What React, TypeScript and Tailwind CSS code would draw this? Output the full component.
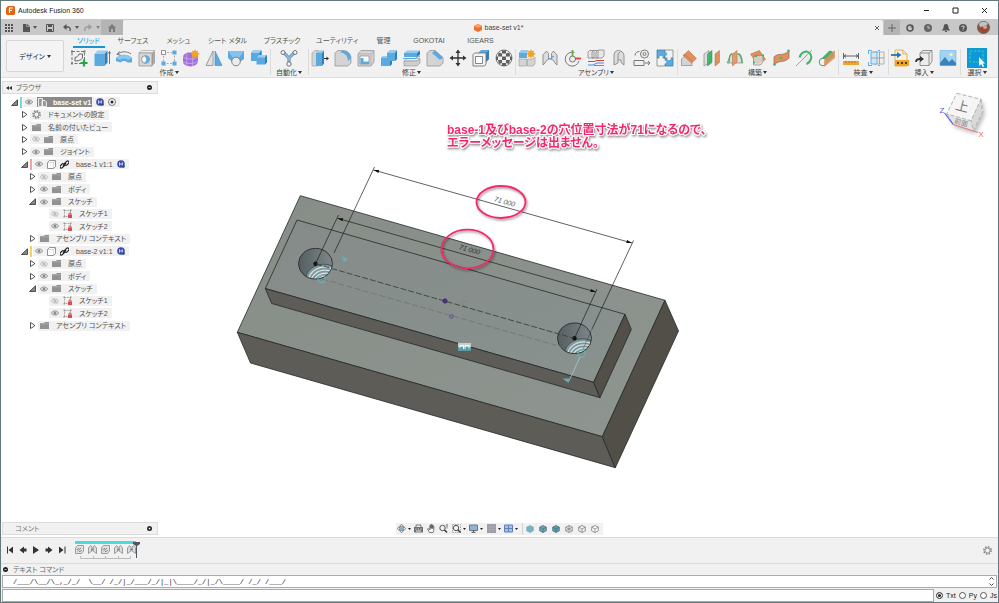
import type { ReactNode } from "react";
import clsx from "clsx";

const BLUE = "#5aa9e0";
const DARK = "#6b6b6b";
const LIGHT = "#dcdcdc";
const ORANGE = "#e0905c";
const GREEN = "#3fb56b";

function Ico({ children, className = "size-[18px]", box = "0 0 18 18" }: { children: ReactNode; className?: string; box?: string }) {
  return (
    <svg viewBox={box} className={clsx("block shrink-0", className)} fill="none" aria-hidden="true">
      {children}
    </svg>
  );
}

function Caret({ className = "text-[#333]" }: { className?: string }) {
  return (
    <Ico box="0 0 4 3" className={clsx("h-[3px] w-1", className)}>
      <path d="M0 0h4L2 3z" fill="currentColor" />
    </Ico>
  );
}

/* ---------- リボンのアイコン ---------- */

const createIcons: [string, ReactNode][] = [
  ["スケッチを作成", <Ico key="i">
    <path d="M2 2.500h12.500v12H2z" stroke="#666" strokeWidth=".9" strokeDasharray="3 1.5" />
    <path d="M1 1.500h2v2H1zM13.500 1.500h2v2h-2zM1 13.500h2v2H1z" fill="#777" />
    <path d="M5 12V8.500C7 8 8.500 7 9 5h3.500v3c0 2.500-3 4-7.500 4z" stroke="#555" strokeWidth=".9" />
    <path d="M14 10.500v7M10.500 14h7" stroke="#23a646" strokeWidth="2.200" />
  </Ico>],
  ["押し出し", <Ico key="i">
    <path d="M1.500 5l3-3.500h10L11.500 5z" fill="#9ccdf0" />
    <path d="M1.500 5h10v12h-10z" fill={BLUE} />
    <path d="M11.500 5L14.500 1.500v12L11.500 17z" fill="#2f7fba" />
    <path d="M16.500 15V3M15.300 4.500l1.200-2 1.200 2" stroke="#555" strokeWidth=".8" />
  </Ico>],
  ["回転", <Ico key="i">
    <path d="M1 9c4-4.500 12-4.500 16 0v4.500h-4.500c-2-2-5-2-7 0L1 12z" fill={BLUE} />
    <path d="M1 9c4-4.500 12-4.500 16 0l-4 2c-2-2-6-2-8 0z" fill="#8cc6ee" />
    <path d="M2 5.500c4-3.500 10-3.500 14-.5M4.500 2.500L2 5.500l3.500.5" stroke={DARK} strokeWidth=".9" />
  </Ico>],
  ["穴", <Ico key="i">
    <path d="M1 4l3-2.500h13L14 4z" fill="#f2f2f2" stroke="#999" strokeWidth=".6" />
    <path d="M14 4l3-2.500V14L14 17z" fill="#a8a8a8" />
    <path d="M1 4h13v13H1z" fill="#d8d8d8" stroke="#8b8b8b" strokeWidth=".7" />
    <circle cx="7.500" cy="10.500" r="4" fill="#f7f7f7" stroke="#888" strokeWidth=".9" />
    <path d="M6.500 7a3.700 3.700 0 0 1 4.500 5 4 4 0 0 1-5 1.500c3-1 3-4 .5-6.500z" fill={BLUE} />
  </Ico>],
  ["パターン", <Ico key="i">
    <path d="M3.500 3.500h11v11h-11z" stroke="#999" strokeWidth=".8" strokeDasharray="2 1.500" />
    <path d="M1.500 1.500h4v4h-4z" fill="#fff" stroke="#777" strokeWidth=".8" />
    <path d="M12.500 1.500h4v4h-4zM1.500 12.500h4v4h-4zM12.500 12.500h4v4h-4z" fill={BLUE} />
  </Ico>],
  ["フォームを作成", <Ico key="i">
    <path d="M1 8c0-2 2-4 5-4.500h6c2 0 4 2 4 4.500v4c0 3-3 5-7 5.500-5-.5-8-2-8-5z" fill="#a070d8" />
    <path d="M1 8c2 1.500 5 2 8 2s6-1 7-2.500M1 12.500c2 1.500 5 2 8 2s6-1 7-3M5 4.500c-.5 4-.5 8 0 12M10.500 4.500c.5 4 .5 8 0 12.500" stroke="#d3b8f2" strokeWidth=".7" />
    <path d="M13 0l1 2.200 2.300-.7-.7 2.200L18 5l-2.300 1 .7 2.300-2.300-.8L13 9.700l-1-2.200-2.300.8.8-2.300L8.500 5l2-1.300-.6-2.200 2.200.7z" fill="#f5a21d" />
  </Ico>],
  ["リブ", <Ico key="i">
    <path d="M8 2v14.500H1z" fill="#e2e2e2" stroke="#888" strokeWidth=".8" />
    <path d="M10 2v14.500h7z" fill={BLUE} stroke="#3b8cc6" strokeWidth=".6" />
  </Ico>],
  ["ロフト", <Ico key="i">
    <path d="M1 2h16v8l-5 3.500-6 0L1 9z" fill={BLUE} />
    <path d="M1 2h16l-5 7H6z" fill="#86c3ec" />
    <circle cx="9" cy="12.500" r="4.300" fill="#ececec" stroke="#777" strokeWidth=".9" />
  </Ico>],
  ["ソリッド結合", <Ico key="i">
    <path d="M1 4l2-2.500h8.500V6H17v7l-2 2.500H6.500V12H1z" fill={BLUE} />
    <path d="M1 4l2-2.500h8.500L9.500 4zM7 8.500L9 6h8l-2 2.500z" fill="#9bd0f3" />
    <path d="M15 8.500L17 6v7l-2 2.500zM9.500 4l2-2.500V6h-2z" fill="#2f7fba" />
  </Ico>],
];

const automateIcons: [string, ReactNode][] = [
  ["自動モデリング", <Ico key="i">
    <path d="M4 4l5 5 5-5M9 9v6" stroke="#55799a" strokeWidth="3" />
    <path d="M4 4l5 5 5-5M9 9v6" stroke="#8cc6ee" strokeWidth="1.500" />
    <circle cx="3" cy="3.500" r="2" fill="#f4f4f4" stroke="#666" strokeWidth=".9" />
    <circle cx="15" cy="3.500" r="2" fill="#f4f4f4" stroke="#666" strokeWidth=".9" />
    <circle cx="9" cy="15" r="2.200" fill="#f4f4f4" stroke="#666" strokeWidth=".9" />
  </Ico>],
];

const modifyIcons: [string, ReactNode][] = [
  ["プレス/プル", <Ico key="i">
    <path d="M1 4l3-2.500h3V17H1z" fill="#d4d4d4" stroke="#999" strokeWidth=".6" />
    <path d="M5 4h6v13H5z" fill={BLUE} />
    <path d="M5 4l2-2.500h6L11 4z" fill="#92caf0" />
    <path d="M11 4l2-2.500v13L11 17z" fill="#2f7fba" />
    <path d="M13 9.500h3" stroke="#333" />
    <path d="M15.500 7.500l2.500 2-2.500 2z" fill="#333" />
  </Ico>],
  ["フィレット", <Ico key="i">
    <path d="M1 4l3-2.500h5c5 0 8 4 8 8V14l-3 3H1z" fill="#d4d4d4" stroke="#8e8e8e" strokeWidth=".7" />
    <path d="M6 3.500l2.500-2c5 0 8.500 3 8.500 8L14 12c0-5-3-8-8-8.500z" fill={BLUE} />
  </Ico>],
  ["シェル", <Ico key="i">
    <path d="M1 5l3-3.500h13V13l-3 4H1z" fill="#d4d4d4" stroke="#8e8e8e" strokeWidth=".7" />
    <path d="M14 5v12M1 5h13l3-3.500" stroke="#a5a5a5" strokeWidth=".6" />
    <path d="M3 7h9v8H3z" fill="#fff" stroke="#888" strokeWidth=".7" />
    <path d="M3.500 9l3 0V12.500h5.500V15H3.500z" fill={BLUE} />
  </Ico>],
  ["結合", <Ico key="i">
    <path d="M1 9l2-2h4V4l2.500-2.500H17V10l-2.500 2H12v3l-2 2H1z" fill={BLUE} />
    <path d="M7 4l2.500-2.500H17L15 4zM1 9l2-2h4v2z" fill="#92caf0" />
    <path d="M15 4l2-2.500V10l-2 2zM10 12h2v3l-2 2z" fill="#2f7fba" />
  </Ico>],
  ["面を分割", <Ico key="i">
    <path d="M1 4h13v4H1z" fill={BLUE} />
    <path d="M1 4l3-2.500h13L14 4z" fill="#92caf0" />
    <path d="M14 4l3-2.500v4L14 8z" fill="#2f7fba" />
    <path d="M1 12l3-2.500h13L14 12z" fill="#eaeaea" stroke="#999" strokeWidth=".5" />
    <path d="M1 12h13l3-2.500V14l-3 3H1z" fill="#cfcfcf" stroke="#8e8e8e" strokeWidth=".6" />
    <path d="M0 9.500h12l5-2.500" stroke={BLUE} />
  </Ico>],
  ["面取り", <Ico key="i">
    <path d="M1 4l3-2.500h5l8 7V14l-3 3H1z" fill="#d4d4d4" stroke="#8e8e8e" strokeWidth=".7" />
    <path d="M6 4l3-2.500 8 7-3 2.500z" fill={BLUE} />
  </Ico>],
  ["移動/コピー", <Ico key="i">
    <path d="M9 2v14M2 9h14" stroke="#333" strokeWidth="1.300" />
    <path d="M9 .5L11.500 4h-5zM9 17.500l2.500-3.500h-5zM.5 9L4 6.500v5zM17.500 9L14 6.500v5z" fill="#333" />
  </Ico>],
  ["スケール", <Ico key="i">
    <path d="M6 4l3-3h8v9l-3 3V4z" fill={BLUE} />
    <path d="M14 4l3-3v9l-3 3z" fill="#2f7fba" />
    <path d="M1 5.500L2.500 4H14v11l-1.500 2H1z" fill="#f3f3f3" stroke="#777" strokeWidth=".9" />
    <path d="M3.500 7.500h7v7h-7z" fill="#fff" stroke="#777" strokeWidth=".9" />
  </Ico>],
  ["外観", <Ico key="i">
    <circle cx="9" cy="9" r="8" fill="#eee" stroke="#666" strokeWidth=".8" />
    <path d="M7 1.200h4v3.300H7zM3.500 3.500L7 4.500v3H3zM11 4.500l3.500-1 .5 4h-4zM7 7.500h4v3.500H7zM1 7.500h2V11H1zM15 7.500h2V11h-2zM3 11h4v3l-3 1zM11 11h4l-1 4-3-1zM7 14h4v3H7z" fill="#606060" />
  </Ico>],
];

const assemblyIcons: [string, ReactNode][] = [
  ["新規コンポーネント", <Ico key="i">
    <path d="M1 4l2-2.500h7L9 4v5H1z" fill={BLUE} />
    <path d="M1 4l2-2.500h7L9 4z" fill="#92caf0" />
    <path d="M1 10h7.500v7H1zM9.500 10H15l2-2v7l-2 2H9.500z" fill="#d4d4d4" stroke="#999" strokeWidth=".6" />
    <path d="M13 0l1 2.300 2.300-.8-.8 2.300L18 5l-2.500 1 .8 2.300-2.300-.8-1 2.300-1-2.300-2.300.8.8-2.300L8 5l2.500-1.200-.8-2.300 2.300.8z" fill="#f5a21d" />
  </Ico>],
  ["ジョイント", <Ico key="i">
    <path d="M2 16V6l3.500-4 2 2.500v6l-2 1L4 14zM16 16V6l-3.500-4-2 2.500v6l2 1L14 14z" fill={LIGHT} stroke="#888" strokeWidth=".9" />
    <path d="M8 9.500l1.500.500 3-3" stroke={BLUE} strokeWidth="1.500" />
  </Ico>],
  ["ジョイントの原点", <Ico key="i">
    <path d="M10.500 3.500A7 7 0 1 0 15 12" stroke={DARK} strokeWidth=".9" />
    <circle cx="8.500" cy="10" r="3" fill="#eee" stroke={DARK} strokeWidth=".9" />
    <path d="M8.500 1v6.500" stroke="#6aae3e" strokeWidth="1.800" />
    <path d="M11 9.500h6" stroke="#e23c3c" strokeWidth="1.800" />
  </Ico>],
  ["剛性グループ", <Ico key="i">
    <path d="M1 3l1.500-1.500H7V9H1zM5 3l1.500-1.500H11V9H5zM9 3l2-2h6v6l-2 2H9z" fill="#e8e8e8" stroke="#888" strokeWidth=".8" />
    <path d="M1 12.500h6l3-1h7" stroke="#e23c3c" />
    <path d="M1 16h5l4-2h7" stroke="#3c8ee2" />
    <path d="M7 16.500h10" stroke="#4fae58" />
  </Ico>],
  ["駆動ジョイント", <Ico key="i">
    <path d="M4 16V6c0-3 2-4.500 4.500-4.500S14 3.500 14 6.500V16l-3-2.500V11H8v3z" fill={LIGHT} stroke="#888" strokeWidth=".9" />
    <path d="M8 11V5l2-2" stroke="#888" strokeWidth=".9" />
  </Ico>],
  ["モーション リンク", <Ico key="i">
    <circle cx="11.500" cy="5" r="4" stroke={DARK} strokeWidth=".9" />
    <circle cx="11.500" cy="5" r="1.500" stroke={DARK} strokeWidth=".9" />
    <path d="M2 6.500c0-2.500 2-4 4.500-4M1 11.500h10v5H1zM12 14h5M15 12l2 2-2 2" stroke={DARK} strokeWidth=".9" />
  </Ico>],
  ["接触セット", <Ico key="i">
    <path d="M1 1h8v8H1zM9 9h8v8H9z" fill={BLUE} stroke="#3478a8" strokeWidth=".7" />
    <path d="M9 1h8v8H9zM1 9h8v8H1z" fill="#f2f2f2" stroke="#777" strokeWidth=".7" />
    <circle cx="9.500" cy="5" r="1.800" fill={BLUE} />
    <circle cx="8.500" cy="13" r="1.800" fill="#f2f2f2" />
    <circle cx="5" cy="8.500" r="1.800" fill="#f2f2f2" />
    <circle cx="13" cy="9.500" r="1.800" fill="#f2f2f2" />
  </Ico>],
];

const constructIcons: [string, ReactNode][] = [
  ["オフセット平面", <Ico key="i">
    <path d="M1.500 10L6 6l6 5v5.500H1.500z" fill="#d4d4d4" stroke="#888" strokeWidth=".7" />
    <path d="M3 6.500L8.500 1.500 16.500 9.500l-5 4.500z" fill={ORANGE} stroke="#b56a3a" strokeWidth=".5" />
    <path d="M3 6.500l3-.5 5.500 5.500" stroke={GREEN} strokeWidth=".9" />
  </Ico>],
  ["角度を指定した平面", <Ico key="i">
    <path d="M1 5l5-3.500V14l-5 3z" fill="#ddd" stroke="#888" strokeWidth=".7" />
    <path d="M4.500 5L9 1.500V13.500L4.500 17z" fill={GREEN} stroke="#2f8c50" strokeWidth=".5" />
    <path d="M12 5l4.500-3.500v12L12 17z" fill={ORANGE} stroke="#b56a3a" strokeWidth=".5" />
  </Ico>],
  ["正接平面", <Ico key="i">
    <path d="M1 14L5 5h8l4 9z" fill="#ddd" stroke="#888" strokeWidth=".7" />
    <path d="M3 14c0-6 1-9 3-9M12 5c3 0 4 4 4 9" stroke={GREEN} strokeWidth="1.300" />
    <path d="M6.500 5L11 1.500V13L6.500 17z" fill={ORANGE} fillOpacity=".85" stroke="#b56a3a" strokeWidth=".5" />
  </Ico>],
  ["中立面", <Ico key="i">
    <path d="M1.500 5l9-3.500 6 9L8 15z" fill={ORANGE} stroke="#b56a3a" strokeWidth=".5" />
    <path d="M4.500 8.500L7 6.500h7V13l-2.500 3h-7z" fill="#ddd" fillOpacity=".75" stroke="#888" strokeWidth=".7" />
    <path d="M6 6h2v2H6zM13 5.500h2v2h-2zM4 12.500h2v2H4z" fill={GREEN} />
  </Ico>],
  ["3 点を通る平面", <Ico key="i">
    <path d="M2 8c5-5 8 0 15-6v7c-6 6-9 1-15 7z" fill={ORANGE} stroke="#8f6a52" strokeWidth=".7" />
    <circle cx="2.500" cy="15.500" r="1.300" fill={GREEN} />
    <circle cx="9" cy="9" r="1.300" fill={GREEN} />
    <circle cx="16.500" cy="1.800" r="1.300" fill={GREEN} />
  </Ico>],
  ["軸", <Ico key="i">
    <path d="M4 8l5-5a5.500 5.500 0 0 1 7 7l-5 5z" fill="#ececec" />
    <path d="M4.500 8.500C6 3 11 1 14.500 4s1.500 9-3 11" stroke={GREEN} strokeWidth="2" />
    <path d="M1 17L17 1" stroke="#dd8352" strokeWidth=".9" />
  </Ico>],
  ["円柱を通る軸", <Ico key="i">
    <path d="M2 11L11 2c3-1 6 2 5 5L7 16z" fill={GREEN} />
    <circle cx="5" cy="13" r="3.800" fill="#f2f2f2" stroke="#2f8c50" strokeWidth=".8" />
    <path d="M6 11L17 1v8L6 18z" fill={ORANGE} fillOpacity=".85" />
  </Ico>],
];

const inspectIcons: [string, ReactNode][] = [
  ["計測", <Ico key="i">
    <path d="M1.500 4v6M16.500 4v6M2 7h14M4 5.500L2 7l2 1.500M14 5.500L16 7l-2 1.500" stroke="#555" strokeWidth=".9" />
    <path d="M1 12h16v4H1z" fill="#f0a52c" />
    <path d="M4 12v2M7 12v2M10 12v2M13 12v2" stroke="#9b6c1a" strokeWidth=".8" />
  </Ico>],
  ["干渉", <Ico key="i">
    <path d="M7 3h10v12H7z" fill="#eee" stroke="#aaa" strokeWidth=".9" />
    <path d="M4 3h6v12H4z" fill="#cfe8f8" stroke={BLUE} strokeWidth=".9" />
    <path d="M1 1.500h4M1 16.500h4M1.500 1v4M1.500 13v4M13 1.500h-2M13 16.500h-2" stroke={BLUE} strokeWidth=".9" />
    <path d="M4 9h13M12.500 3v12" stroke="#999" strokeWidth=".9" />
  </Ico>],
];

const insertIcons: [string, ReactNode][] = [
  ["SVG を挿入", <Ico key="i">
    <path d="M4 1h8l4 4v12H4z" fill="#fdf1dd" stroke="#e3a23a" strokeWidth=".8" />
    <path d="M12 1v4h4" stroke="#e3a23a" strokeWidth=".8" />
    <path d="M4 11h14v6H4z" fill="#eda526" />
    <path d="M6 14h2M10 14h2M14 14h2" stroke="#5c3a00" strokeWidth="2" />
    <path d="M0 6h7" stroke="#1b78c8" strokeWidth="1.800" />
    <path d="M6 3L10.500 6 6 9z" fill="#1b78c8" />
  </Ico>],
  ["派生を挿入", <Ico key="i">
    <path d="M5 4l3-2.500h9v11L14 16.500H5z" fill="#ececec" stroke="#888" strokeWidth=".9" />
    <path d="M5 4h9v12.500M14 4l3-2.500" stroke="#888" strokeWidth=".9" />
    <path d="M1 13c0-2 1-3 4-3" stroke="#333" strokeWidth="1.800" />
    <path d="M5 7l4 3-4 3z" fill="#333" />
  </Ico>],
  ["キャンバスを挿入", <Ico key="i">
    <path d="M1 1.500h16v15H1z" fill="#a0d3f4" stroke="#6db4e2" strokeWidth=".6" />
    <path d="M1 14l5-6 4 5 3-3 4 4v2.500H1z" fill="#3b83bd" />
    <circle cx="12" cy="5.500" r="1.600" fill="#fff3ae" />
  </Ico>],
];

const selectIcons: [string, ReactNode][] = [
  ["選択", <Ico key="i" className="size-5" box="0 0 20 20">
    <path d="M0 0h20v20H0z" fill="#0d97dc" />
    <path d="M3 3h13v11H3z" stroke="#42d29a" strokeDasharray="2.500 1.500" />
    <path d="M12 9v9l2.200-2 1.600 3 1.400-.8-1.600-2.800H18z" fill="#fff" />
  </Ico>],
];

const ribbonGroups = [
  { label: "作成", width: "w-[202px]", icons: createIcons },
  { label: "自動化", width: "w-[38px]", icons: automateIcons },
  { label: "修正", width: "w-[207px]", icons: modifyIcons },
  { label: "アセンブリ", width: "w-[162px]", icons: assemblyIcons },
  { label: "構築", width: "w-[161px]", icons: constructIcons },
  { label: "検査", width: "w-[50px]", icons: inspectIcons },
  { label: "挿入", width: "w-[72px]", icons: insertIcons },
  { label: "選択", width: "w-[34px]", icons: selectIcons },
];

const ribbonTabs = [
  { label: "ソリッド", width: "w-[41px]", active: true },
  { label: "サーフェス", width: "w-[48px]" },
  { label: "メッシュ", width: "w-[43px]" },
  { label: "シート メタル", width: "w-[55px]" },
  { label: "プラスチック", width: "w-[54px]" },
  { label: "ユーティリティ", width: "w-[56px]" },
  { label: "管理", width: "w-[37px]" },
  { label: "GOKOTAI", width: "w-[54px]" },
  { label: "IGEARS", width: "w-[49px]" },
];

/* ---------- タイトルバーとタブ ---------- */

function TitleBar() {
  return (
    <header className="flex h-[18px] shrink-0 items-center bg-white pl-[5px] text-[#222]">
      <Ico className="size-[9px]" box="0 0 9 9">
        <path d="M2 0h6l1 1v7L8 9H1L0 8V2z" fill="#e8620f" />
        <path d="M3.500 7V2H7M3.500 4.500H6" stroke="#fff" strokeWidth="1.200" />
      </Ico>
      <h1 className="ml-[3px] flex-1">Autodesk Fusion 360</h1>
      <div className="flex items-center gap-[22px] pr-[10px] text-[#222]">
        <button aria-label="最小化"><Ico className="size-[7px]" box="0 0 7 7"><path d="M1 3.500h5" stroke="currentColor" /></Ico></button>
        <button aria-label="最大化"><Ico className="size-[7px]" box="0 0 7 7"><path d="M1 1h5v5H1z" stroke="currentColor" /></Ico></button>
        <button aria-label="閉じる"><Ico className="size-[7px]" box="0 0 7 7"><path d="M1 1l5 5M6 1L1 6" stroke="currentColor" /></Ico></button>
      </div>
    </header>
  );
}

function TabBar() {
  return (
    <div className="flex h-4 shrink-0 items-stretch bg-[#c8c8c8] pt-px text-[#555]">
      <div className="flex w-[100px] shrink-0 items-center pl-1">
        <button aria-label="データ パネル"><Ico className="size-2" box="0 0 8 8"><path d="M0 0h2v2H0zM3 0h2v2H3zM6 0h2v2H6zM0 3h2v2H0zM3 3h2v2H3zM6 3h2v2H6zM0 6h2v2H0zM3 6h2v2H3zM6 6h2v2H6z" fill="currentColor" /></Ico></button>
        <button aria-label="ファイル" className="ml-[9px] flex items-center gap-[3px]">
          <Ico className="size-2" box="0 0 8 8"><path d="M1 0h3.500v3H8v5H1zM5.200 0L8 2.400H5.200z" fill="currentColor" /></Ico>
          <Caret className="text-[#555]" />
        </button>
        <button aria-label="保存" className="ml-[9px]"><Ico className="size-2" box="0 0 8 8"><path d="M.5.500h7v7h-7z" stroke="currentColor" /><path d="M2 0h4v3H2zM2 5h4v3H2z" fill="currentColor" /></Ico></button>
        <button aria-label="元に戻す" className="ml-[9px] flex items-center gap-1">
          <Ico className="size-2" box="0 0 8 8"><path d="M1 3h4c2 0 2.500 2 2 4" stroke="currentColor" strokeWidth="1.300" /><path d="M3.500 0v6L0 3z" fill="currentColor" /></Ico>
          <Caret className="text-[#555]" />
        </button>
        <button aria-label="やり直し" className="ml-[5px] flex items-center gap-1 text-[#999]">
          <Ico className="size-2" box="0 0 8 8"><path d="M7 3H3C1 3 .5 5 1 7" stroke="currentColor" strokeWidth="1.300" /><path d="M4.500 0v6L8 3z" fill="currentColor" /></Ico>
          <Caret className="text-[#888]" />
        </button>
      </div>
      <button aria-label="ホーム" className="flex w-[22px] items-center justify-center bg-[#b4b4b4]">
        <Ico className="size-2" box="0 0 8 8"><path d="M4 0l4 4H7v4H5V5H3v3H1V4H0z" fill="#7c7c7c" /></Ico>
      </button>
      <div className="flex flex-1 items-center justify-end rounded-t-[2px] bg-[#f1f1f1] pr-[3px]">
        <div className="flex flex-1 items-center justify-center gap-[3px] text-[#444]">
          <Ico className="size-2" box="0 0 8 8"><path d="M4 0l4 2v4L4 8 0 6V2z" fill="#f0702a" /><path d="M4 0l4 2-4 2-4-2z" fill="#fba06a" /></Ico>
          base-set v1*
        </div>
        <button aria-label="タブを閉じる"><Ico className="size-[6px]" box="0 0 6 6"><path d="M1 1l4 4M5 1L1 5" stroke="#666" /></Ico></button>
      </div>
      <div className="flex w-[115px] shrink-0 items-center">
        <button aria-label="新しいタブ" className="ml-px flex h-full w-4 items-center justify-center bg-[#b4b4b4]">
          <Ico className="size-2" box="0 0 8 8"><path d="M4 0v8M0 4h8" stroke="#666" /></Ico>
        </button>
        <div className="flex flex-1 items-center justify-between pl-[6px] pr-[8px]">
          <button aria-label="拡張機能"><Ico className="size-2" box="0 0 8 8"><circle cx="4" cy="4" r="3" stroke="currentColor" strokeWidth="1.500" /><path d="M4 3.500l3-3v3z" fill="currentColor" /></Ico></button>
          <button aria-label="ジョブ ステータス"><Ico className="size-2" box="0 0 8 8"><circle cx="4" cy="4" r="4" fill="#666" /><path d="M4 1.800V4h2" stroke="#ccc" /></Ico></button>
          <button aria-label="通知"><Ico className="size-2" box="0 0 8 8"><path d="M4 0c2 0 2.500 2 2.500 4L8 6.500H0L1.500 4C1.500 2 2 0 4 0zM3 7h2v1H3z" fill="currentColor" /></Ico></button>
          <button aria-label="ヘルプ"><Ico className="size-2" box="0 0 8 8"><circle cx="4" cy="4" r="4" fill="#555" /><path d="M2.800 3c0-1.600 2.500-1.500 2.400 0C5.200 3.900 4 3.900 4 5M4 5.700v.9" stroke="#eee" strokeWidth=".9" /></Ico></button>
          <button aria-label="アカウント"><Ico className="size-[13px]" box="0 0 13 13">
            <circle cx="6.500" cy="6.500" r="6.500" fill="#7d5a50" />
            <path d="M2 3c2-3 7-3 9 0L8 5 3 6z" fill="#b9c6c9" />
            <path d="M2 8c2-3 7-2 9 0-1 3-7 4-9 0z" fill="#a8402c" />
            <circle cx="8" cy="6" r="2" fill="#d7a288" />
          </Ico></button>
        </div>
      </div>
    </div>
  );
}

function Ribbon() {
  return (
    <div className="flex h-[43px] shrink-0 border-b border-[#dedede] bg-[#f1f1f1]">
      <div className="shrink-0 pl-[5px] pt-[5px]">
        <button className="flex h-8 w-[58px] items-center justify-center gap-[2px] rounded-[2px] border border-[#d6d6d6] bg-[#f4f4f4] text-[#222]">
          デザイン <Caret />
        </button>
      </div>
      <div className="flex-1 pl-[4px]">
        <nav className="flex h-[13px]">
          {ribbonTabs.map((tab) => (
            <button key={tab.label} className={clsx("flex shrink-0 justify-center", tab.width, tab.active ? "text-[#1c8fd0]" : "text-[#555]")}>
              <span className={clsx("flex h-[13px] min-w-8 items-center justify-center whitespace-nowrap border-b-2", tab.active ? "border-[#1b93d2]" : "border-transparent")}>
                {tab.label}
              </span>
            </button>
          ))}
        </nav>
        <div className="flex h-[29px]">
          {ribbonGroups.map((group, i) => (
            <section key={group.label} className={clsx("flex shrink-0 flex-col items-stretch", group.width, i > 0 && "bg-[linear-gradient(#dcdcdc,#dcdcdc)] bg-[length:1px_26px] bg-[position:0_1px] bg-no-repeat")}>
              <div className="flex h-5 items-center justify-around">
                {group.icons.map(([name, icon]) => (
                  <button key={name} aria-label={name} className="shrink-0">{icon}</button>
                ))}
              </div>
              <button className="flex h-[9px] items-center justify-center gap-px whitespace-nowrap text-[#444]">
                {group.label}
                <Caret />
              </button>
            </section>
          ))}
        </div>
      </div>
    </div>
  );
}

/* ---------- ブラウザ ツリー ---------- */

function Eye({ off }: { off?: boolean }) {
  return (
    <Ico className={clsx("h-[6px] w-2", off ? "text-[#bbb]" : "text-[#8a8a8a]")} box="0 0 8 6">
      <path d="M.3 3C2 .3 6 .3 7.700 3 6 5.700 2 5.700.3 3z" stroke="currentColor" strokeWidth=".9" />
      <circle cx="4" cy="3" r="1.500" fill="currentColor" />
      {off && <path d="M1.500 0l5 6" stroke="currentColor" strokeWidth=".8" />}
    </Ico>
  );
}

function TreeArrow({ open }: { open?: boolean }) {
  return (
    <Ico className="size-[7px]" box="0 0 7 7">
      {open ? <path d="M.5 6.500L6.500.8v5.700z" fill="#888" stroke="#444" strokeWidth=".9" /> : <path d="M1.500.500L5.500 3v1L1.500 6.500z" fill="#fff" stroke="#444" strokeWidth=".9" />}
    </Ico>
  );
}

function Badge() {
  return (
    <Ico className="size-2" box="0 0 8 8">
      <circle cx="4" cy="4" r="3.800" fill="#3b4ba8" />
      <path d="M2.500 2.300v3.400M5.300 2.300v3.400M2.500 4h3" stroke="#cdd5f5" />
      <circle cx="6.500" cy="6.500" r="1.300" fill="#33427f" />
    </Ico>
  );
}

const treeIcons: Record<string, ReactNode> = {
  folder: <Ico className="h-[7px] w-[9px]" box="0 0 9 7"><path d="M0 1h4l1-1h4v7H0z" fill="#929292" /><path d="M0 1.800h9" stroke="#bbb" strokeWidth=".6" /></Ico>,
  gear: <Ico className="size-[9px]" box="0 0 9 9"><circle cx="4.500" cy="4.500" r="3.600" stroke="#888" strokeWidth="1.600" strokeDasharray="1.600 1.200" /><circle cx="4.500" cy="4.500" r="2.500" stroke="#888" /></Ico>,
  sketch: <Ico className="size-[9px]" box="0 0 9 9"><path d="M1.500 1.500h6v6h-6z" stroke="#888" strokeWidth=".7" strokeDasharray="2 1" /><path d="M.5.500h1.500v1.500H.5zM7 .5h1.500v1.500H7zM.5 7h1.500v1.500H.5z" fill="#999" /><path d="M5 5.500h4V9H5z" fill="#d84a54" /><path d="M6 5.500V4h2v1.500" stroke="#d84a54" strokeWidth=".8" /></Ico>,
  part: <Ico className="size-[9px]" box="0 0 9 9"><path d="M.5 2.500l2-2h6v6l-2 2h-6z" fill="#fff" stroke="#777" strokeWidth=".8" /><path d="M.5 2.500h6v6M6.500 2.500l2-2" stroke="#bbb" strokeWidth=".6" /></Ico>,
  assembly: <Ico className="size-[9px]" box="0 0 9 9"><path d="M.5.500h4v8h-4zM4 3.500l1-1h2l1.500 1.500v4.500H4z" fill="#999" stroke="#fff" strokeWidth=".8" /></Ico>,
};

type TreeRow = {
  label: string;
  indent: string;
  arrow?: "open" | "closed";
  eye?: "on" | "off";
  icon: string;
  kind?: "root" | "part";
  bar?: string;
};

const partRows = (name: string, bar: string): TreeRow[] => [
  { label: name, indent: "pl-[20px]", arrow: "open", eye: "on", icon: "part", kind: "part", bar },
  { label: "原点", indent: "pl-[28px]", arrow: "closed", eye: "off", icon: "folder" },
  { label: "ボディ", indent: "pl-[28px]", arrow: "closed", eye: "on", icon: "folder" },
  { label: "スケッチ", indent: "pl-[28px]", arrow: "open", eye: "on", icon: "folder" },
  { label: "スケッチ1", indent: "pl-[48px]", eye: "off", icon: "sketch" },
  { label: "スケッチ2", indent: "pl-[48px]", eye: "on", icon: "sketch" },
  { label: "アセンブリ コンテキスト", indent: "pl-[28px]", arrow: "closed", icon: "folder" },
];

const treeRows: TreeRow[] = [
  { label: "base-set v1", indent: "pl-[10px]", arrow: "open", eye: "on", icon: "assembly", kind: "root", bar: "bg-[#6cdcdc]" },
  { label: "ドキュメントの設定", indent: "pl-[20px]", arrow: "closed", icon: "gear" },
  { label: "名前の付いたビュー", indent: "pl-[20px]", arrow: "closed", icon: "folder" },
  { label: "原点", indent: "pl-[20px]", arrow: "closed", eye: "off", icon: "folder" },
  { label: "ジョイント", indent: "pl-[20px]", arrow: "closed", eye: "on", icon: "folder" },
  ...partRows("base-1 v1:1", "bg-[#f9a0a4]"),
  ...partRows("base-2 v1:1", "bg-[#fbcf63]"),
];

function TreeItem({ row }: { row: TreeRow }) {
  return (
    <li className={clsx("flex items-center", row.indent)}>
      {row.arrow && <button aria-label={row.label} className="mr-[2px]"><TreeArrow open={row.arrow === "open"} /></button>}
      {row.bar && <span className={clsx("mr-px h-[11px] w-[2px]", row.bar)} />}
      <div className="flex h-[10px] items-center gap-[4px] whitespace-nowrap bg-[#f1f1f1] pl-[2px] pr-[4px] text-[#505050]">
        {row.eye && <Eye off={row.eye === "off"} />}
        {row.kind === "root" ? (
          <span className="flex h-[10px] items-center gap-[6px] bg-[#8a8a8a] px-px font-bold text-white">
            {treeIcons[row.icon]}
            {row.label}
          </span>
        ) : (
          <>
            {treeIcons[row.icon]}
            {row.kind === "part" && (
              <Ico className="size-[9px]" box="0 0 9 9"><g stroke="#222" strokeWidth="1.200"><rect x="-.3" y="4.500" width="5" height="2.800" rx="1.400" transform="rotate(-45 2.200 6)" /><rect x="4.300" y="1.700" width="5" height="2.800" rx="1.400" transform="rotate(-45 6.800 3.100)" /><path d="M3 6l3-3" /></g></Ico>
            )}
            <span className="pl-[3px]">{row.label}</span>
          </>
        )}
        {row.kind && <Badge />}
        {row.kind === "root" && (
          <Ico className="size-2" box="0 0 8 8"><circle cx="4" cy="4" r="3.500" fill="#fff" stroke="#555" strokeWidth=".8" /><circle cx="4" cy="4" r="1.500" fill="#222" /></Ico>
        )}
      </div>
    </li>
  );
}

function BrowserPanel() {
  return (
    <aside className="w-[157px]">
      <div className="mt-[3px] ml-px flex h-[13px] items-center border border-[#dcdcdc] bg-[#f1f1f1] px-[3px] text-[#666]">
        <Ico className="h-[4px] w-[6px]" box="0 0 6 4"><path d="M3 0v4L0 2zM6 0v4L3 2z" fill="#333" /></Ico>
        <h2 className="ml-1 flex-1">ブラウザ</h2>
        <button aria-label="表示オプション"><Ico className="mr-[2px] size-[5px]" box="0 0 5 5"><circle cx="2.500" cy="2.500" r="2.500" fill="#222" /><path d="M1.500 2.500h2" stroke="#fff" strokeWidth=".7" /></Ico></button>
      </div>
      <ul className="mt-[2px] grid h-[236px] auto-rows-fr">
        {treeRows.map((row, i) => <TreeItem key={i} row={row} />)}
      </ul>
    </aside>
  );
}

/* ---------- モデル ---------- */

function Hole({ x, y }: { x: number; y: number }) {
  const id = `hole${x}`;
  return (
    <g>
      <clipPath id={id}><ellipse cx={x} cy={y} rx="17" ry="15.300" /></clipPath>
      <ellipse cx={x} cy={y} rx="17" ry="15.300" fill="url(#holeFill)" />
      <g clipPath={`url(#${id})`}>
        <ellipse cx={x + 8} cy={y + 16} rx="18" ry="15.500" fill="#7e9699" stroke="#39474a" strokeWidth=".8" />
        <g stroke="#d5e3e5" strokeWidth="1.200">
          <ellipse cx={x + 9} cy={y + 17.500} rx="16" ry="14" />
          <ellipse cx={x + 9.500} cy={y + 18.500} rx="14" ry="12" />
          <ellipse cx={x + 10} cy={y + 19.500} rx="12" ry="10" />
          <ellipse cx={x + 10.500} cy={y + 20.500} rx="10" ry="8" />
        </g>
      </g>
      <ellipse cx={x} cy={y} rx="17" ry="15.300" stroke="#222" strokeWidth=".8" />
      <circle cx={x} cy={y} r="2.200" fill="#111" />
    </g>
  );
}

function ModelView() {
  return (
    <svg viewBox="1 78 997 459" className="absolute inset-0 h-full w-full" fill="none" role="img" aria-label="base-set v1">
      <defs>
        <linearGradient id="holeFill"><stop stopColor="#555e60" /><stop offset="1" stopColor="#7d878a" /></linearGradient>
        <linearGradient id="top" x1="0" y1="0" x2="1" y2="1"><stop stopColor="#878d87" /><stop offset="1" stopColor="#8e948f" /></linearGradient>
        <linearGradient id="upper" x1="0" y1="0" x2="1" y2="1"><stop stopColor="#858b88" /><stop offset="1" stopColor="#89928f" /></linearGradient>
        <filter id="soft" x="-20%" y="-20%" width="140%" height="140%"><feDropShadow dx="1" dy="1.500" stdDeviation="1.200" floodColor="#000" floodOpacity=".45" /></filter>
      </defs>

      <g stroke="#25292a" strokeWidth=".8" strokeLinejoin="round">
        <path d="M300.300 195.700L665 300.300 602.300 436.700 237.300 332.300z" fill="url(#top)" />
        <path d="M237.300 332.300L602.300 436.700 615.300 467.700 250.500 363z" fill="#5d5c56" />
        <path d="M665 300.300L678.500 331 615.300 467.700 602.300 436.700z" fill="#524f48" />
        <path d="M297 220L625 314.300 593.700 382.300 265.300 288.500z" fill="url(#upper)" />
        <path d="M265.300 288.500L593.700 382.300 600 397.700 271.700 303.500z" fill="#5d5c56" />
        <path d="M625 314.300L631.300 329.500 600 397.700 593.700 382.300z" fill="#524f48" />
      </g>

      <Hole x={315.5} y={263.7} />
      <Hole x={574.5} y={338.3} />

      <path d="M316 264L574 338.300" stroke="#3a3f40" strokeWidth=".9" strokeDasharray="6 2" />
      <path d="M322 279L562 347" stroke="#6b7373" strokeWidth=".8" strokeDasharray="6 2.500" />
      <circle cx="445" cy="301" r="2.200" fill="#4b3387" stroke="#2c2455" strokeWidth=".6" />
      <circle cx="451.500" cy="316.500" r="2" fill="#7a6fa0" stroke="#5d5680" strokeWidth=".6" />
      <circle cx="464.500" cy="303.500" r="2" fill="#7f9b86" stroke="#6c8573" strokeWidth=".6" />

      <g stroke="#79a9ad" strokeWidth=".8">
        <circle cx="321.500" cy="279" r="3.800" stroke="#5fc3ce" strokeWidth=".7" />
        <circle cx="581.500" cy="353.500" r="3.800" stroke="#5fc3ce" strokeWidth=".7" />
        <path d="M331 270l10-8" strokeOpacity=".6" />
        <path d="M580 357l-11 24" stroke="#a4c9cd" />
        <path d="M341.500 256l7 3-4.500 3.500zM562.500 378.500l7.500 0-1.500 4.500z" fill="#6aa9af" stroke="none" />
      </g>
      <path d="M458 343h13v8h-13z" fill="#bfd0d1" />
      <path d="M458 347h13v4h-13z" fill="#5c9ea3" />
      <path d="M460 348v-2.500h3.500V349M465 349v-3.500h4v3" stroke="#fff" strokeWidth=".9" />

      <g stroke="#1e1e1e" strokeWidth=".7">
        <path d="M373.500 170L632 243M374.500 167L334 253M633.500 240.500L592 329" />
        <path d="M592 329L583 349" strokeOpacity=".5" />
        <path d="M337.500 218.300L596 292M338.500 215L315.500 263.700M597 289L574.500 338.300" />
      </g>
      <path d="M373.500 170l5.700 0-.8 3zM632 243l-5.700 0 .8-3zM337.500 218.300l5.700 0-.8 3zM596 292l-5.700 0 .8-3z" fill="#111" />

      <g className="font-['Liberation_Sans',sans-serif] text-[7px] italic" fill="#555" textAnchor="middle">
        <text x="504" y="204" transform="rotate(16 504 204)">71 000</text>
        <text x="469" y="252" fill="#303030" transform="rotate(16 469 252)">71 000</text>
      </g>
      <g stroke="#f5286c" strokeWidth="1.800" filter="url(#soft)">
        <ellipse cx="501" cy="202" rx="24.500" ry="16" />
        <ellipse cx="467.500" cy="249" rx="26" ry="19.300" />
      </g>
      <g className="text-[12px] font-bold" fill="#f5286c" stroke="#fff" strokeWidth="2" strokeLinejoin="round" paintOrder="stroke" filter="url(#soft)">
        <text x="447" y="134">base-1及びbase-2の穴位置寸法が71になるので、</text>
        <text x="447" y="147">エラーメッセージは出ません。</text>
      </g>
    </svg>
  );
}

function ViewCube() {
  return (
    <svg viewBox="936 86 56 54" className="mt-2 mr-[6px] h-[54px] w-[56px]" fill="none" role="img" aria-label="ビューキューブ">
      <filter id="cubeShadow" x="-30%" y="-30%" width="170%" height="170%"><feDropShadow dx="2" dy="3" stdDeviation="2" floodOpacity=".28" /></filter>
      <g filter="url(#cubeShadow)">
        <path d="M956.700 93.300L981 99.300 971 120.700 946.700 114z" fill="#f5f5f5" />
        <path d="M946.700 114L971 120.700 973.500 130.700 953.300 124.300z" fill="#e3e3e3" />
        <path d="M981 99.300L982.500 112 973.500 130.700 971 120.700z" fill="#d9d9d9" />
      </g>
      <path d="M956.700 93.300L981 99.300 971 120.700 946.700 114zM981 99.300L982.500 112 973.500 130.700 971 120.700M946.700 114l6.600 10.300" stroke="#aaa" strokeDasharray="4 2" strokeWidth=".9" />
      <path d="M944.500 113L953.300 124.500" stroke="#5c5ce8" strokeWidth="1.200" />
      <path d="M953.300 124.500L978 132.500" stroke="#ee7777" strokeWidth="1.200" />
      <text x="962" y="111" textAnchor="middle" fontSize="13" fill="#777" transform="rotate(14 962 107)">上</text>
      <text x="961" y="125" textAnchor="middle" fontSize="7" fill="#888" transform="rotate(16 961 123)">前面</text>
      <text x="942" y="113" textAnchor="middle" fontSize="8" fill="#5656e8">Z</text>
      <text x="981" y="137" textAnchor="middle" fontSize="8" fill="#ee6666">X</text>
    </svg>
  );
}

const cube = (fill: string, line: string) => (
  <Ico className="size-2" box="0 0 8 8">
    <path d="M4 .5l3.300 1.700v3.600L4 7.500.7 5.800V2.200z" fill={fill} stroke={line} strokeWidth=".8" />
    <path d="M.7 2.200L4 4l3.300-1.800M4 4v3.500" stroke={line} strokeWidth=".7" />
  </Ico>
);

const navTools: { name: string; menu?: boolean; icon: ReactNode }[] = [
  { name: "オービット", menu: true, icon: <Ico className="size-[9px]" box="0 0 9 9"><ellipse cx="4.500" cy="4.500" rx="4" ry="1.800" stroke="#666" strokeWidth=".8" /><ellipse cx="4.500" cy="4.500" rx="1.800" ry="4" stroke="#666" strokeWidth=".8" /><circle cx="4.500" cy="4.500" r="1.200" fill={BLUE} /></Ico> },
  { name: "ビュー正面", icon: <Ico className="size-[9px]" box="0 0 9 9"><path d="M0 3h9v5.500H0z" fill="#707070" /><path d="M2 3V1h5v2" stroke="#777" /><path d="M1.500 5h1M4 5h1M6.500 5h1M2 7h5" stroke="#eee" /></Ico> },
  { name: "画面移動", icon: <Ico className="size-[9px]" box="0 0 9 9"><path d="M2.500 8.500L.5 5l1-.5L2.800 6V1.500h1V4.500v-4h1v4-3.500h1v3.500-2.500h1V6.500L6 8.500z" fill="#fff" stroke="#555" strokeWidth=".8" /></Ico> },
  { name: "ズーム", icon: <Ico className="size-[9px]" box="0 0 9 9"><circle cx="3.500" cy="4" r="2.700" stroke="#555" /><path d="M5.500 6l2.500 2.500" stroke="#333" strokeWidth="1.400" /><path d="M8 .5v4M7 1.500L8 .500l1 1" stroke="#555" strokeWidth=".7" /></Ico> },
  { name: "窓ズーム", menu: true, icon: <Ico className="size-[9px]" box="0 0 9 9"><path d="M.5.500h8v8h-8z" stroke="#888" strokeWidth=".7" strokeDasharray="1.500 1" /><circle cx="4" cy="4" r="2.700" fill="#e9f3f5" stroke="#555" /><path d="M6 6l2.500 2.500" stroke="#333" strokeWidth="1.400" /></Ico> },
  { name: "表示設定", menu: true, icon: <Ico className="size-[9px]" box="0 0 9 9"><path d="M.5 1h8v5.500h-8z" fill="#8db4dc" stroke="#777" /><path d="M2.500 8.300h4M4.500 6.500V8" stroke="#555" /></Ico> },
  { name: "グリッドとスナップ", menu: true, icon: <Ico className="size-[9px]" box="0 0 9 9"><path d="M0 0h9v9H0z" fill="#9a9da6" /><path d="M0 3h9M0 6h9M3 0v9M6 0v9" stroke="#b4b6bd" strokeWidth=".5" /></Ico> },
  { name: "ビューポート", menu: true, icon: <Ico className="size-[9px]" box="0 0 9 9"><path d="M.5 1h8v7h-8z" fill="#a5c3ea" stroke="#5f7fb5" /><path d="M4.500 1v7M.5 4.500h8" stroke="#5f7fb5" /></Ico> },
];

const displayTools: [string, ReactNode][] = [
  ["シェーディング", cube("#76b4c4", "#7fb0bd")],
  ["隠線シェーディング", cube("#6fa5b4", "#4a6f7b")],
  ["エッジ シェーディング", cube("#5c9db0", "#4a6f7b")],
  ["ワイヤフレーム", <Ico key="w" className="size-2" box="0 0 8 8"><path d="M4 .5l3.300 1.700v3.600L4 7.500.7 5.800V2.200zM.7 2.200L4 4l3.300-1.800M4 .5v7M.7 5.800L4 4l3.300 1.800" stroke="#777" strokeWidth=".7" /></Ico>],
  ["隠線ワイヤフレーム", cube("#f4f4f4", "#777")],
  ["エッジ ワイヤフレーム", cube("#fff", "#777")],
];

function Canvas() {
  return (
    <main className="relative flex min-h-0 flex-1 flex-col justify-between bg-white">
      <ModelView />
      <div className="relative flex items-start justify-between">
        <BrowserPanel />
        <ViewCube />
      </div>
      <div className="relative mb-[2px] grid grid-cols-[1fr_auto_1fr] items-center">
        <div className="ml-px flex h-[13px] w-[156px] items-center border border-[#dcdcdc] bg-[#f1f1f1] pl-3 pr-[5px] text-[#777]">
          <h2 className="flex-1">コメント</h2>
          <button aria-label="コメントを追加"><Ico className="size-[5px]" box="0 0 5 5"><circle cx="2.500" cy="2.500" r="2.500" fill="#222" /><path d="M1.500 2.500h2M2.500 1.500v2" stroke="#fff" strokeWidth=".7" /></Ico></button>
        </div>
        <div className="flex h-3 w-[207px] items-center justify-between bg-[#f1f1f1] px-[1px]">
          {navTools.map((tool) => (
            <button key={tool.name} aria-label={tool.name} className="flex items-center gap-[2px]">
              {tool.icon}
              {tool.menu && <Ico box="0 0 3 2" className="h-[2px] w-[3px]"><path d="M0 0h3L1.500 2z" fill="#222" /></Ico>}
            </button>
          ))}
          <span className="h-3 w-px bg-[#d0d0d0]" />
          <div className="flex gap-[5px] pr-[3px]">
            {displayTools.map(([name, icon]) => <button key={name} aria-label={name}>{icon}</button>)}
          </div>
        </div>
      </div>
    </main>
  );
}

/* ---------- タイムラインとテキスト コマンド ---------- */

const playback: [string, string][] = [
  ["先頭へ", "M1 .5h1v7H1zM7 .5v7L2.500 4z"],
  ["前へ", "M5 .5v7L.5 4zM5 2.500h2.500v3H5z"],
  ["再生", "M1 0l6 4-6 4z"],
  ["次へ", "M3 .5v7L7.500 4zM.5 2.500H3v3H.5z"],
  ["末尾へ", "M1 .5v7L5.500 4zM6.500.500h1v7h-1z"],
];

const linkedPart = <Ico className="size-[9px]" box="0 0 9 9"><path d="M.5 3l2-2.500h6v5.500l-2 2.500h-6z" fill="#e2e2e2" stroke="#888" strokeWidth=".8" /><path d="M2.500 6L6 3M2 5c0-1 1-1.500 2-1.500M4 6.500c1.500 0 2.500-.5 2.500-1.500" stroke="#777" strokeWidth=".9" /></Ico>;
const joint = <Ico className="size-[9px]" box="0 0 9 9"><path d="M.5 8.500V3l2-2.500L4 2v4L2.500 7zM8.500 8.500V3l-2-2.500L5 2v4l1.500 1z" fill="#ddd" stroke="#888" strokeWidth=".8" /><path d="M3 5l3-1" stroke="#3b8fd0" /></Ico>;
const features = [linkedPart, joint, linkedPart, joint, joint];

function Timeline() {
  return (
    <div className="flex h-[26px] shrink-0 items-center border-t border-[#dcdcdc] bg-[#f1f1f1] pl-[5px]">
      <div className="flex gap-[5px] pb-px text-[#333]">
        {playback.map(([name, d]) => (
          <button key={name} aria-label={name}><Ico className="size-2" box="0 0 8 8"><path d={d} fill="currentColor" /></Ico></button>
        ))}
      </div>
      <div className="ml-[9px] flex h-[19px] items-start">
        <div className="w-[61px] border-t-[3px] border-[#4fd8dc]">
          <div className="flex justify-between pt-px">
            {features.map((icon, i) => <button key={i} aria-label={`フィーチャ ${i + 1}`}>{icon}</button>)}
          </div>
          <Ico className="mt-[2px] h-[3px] w-[61px]" box="0 0 61 3"><path d="M5.500 0v2.500h50V0M18.500 0v2M30.500 0v2M43.500 0v2" stroke="#bbb" /></Ico>
        </div>
        <Ico className="-ml-[3px] h-[17px] w-[7px]" box="0 0 7 17"><path d="M0 1h7v2L4 5v12H3V5L0 3z" fill="#555" /></Ico>
      </div>
      <button aria-label="設定" className="ml-auto mr-[6px]">
        <Ico className="size-[9px]" box="0 0 9 9"><circle cx="4.500" cy="4.500" r="3.700" stroke="#888" strokeWidth="1.500" strokeDasharray="1.600 1.300" /><circle cx="4.500" cy="4.500" r="2.600" stroke="#888" /></Ico>
      </button>
    </div>
  );
}

function TextCommands() {
  return (
    <section className="shrink-0 bg-[#f1f1f1]">
      <div className="flex h-3 items-center gap-[5px] border-t border-[#dcdcdc] pl-[2px] text-[#666]">
        <Ico className="size-[5px]" box="0 0 5 5"><circle cx="2.500" cy="2.500" r="2.500" fill="#222" /><path d="M1.500 2.500h2" stroke="#fff" strokeWidth=".7" /></Ico>
        <h2>テキスト コマンド</h2>
      </div>
      <div className="mx-px flex h-[13px] items-center border border-[#aaa] bg-white">
        <input
          readOnly
          aria-label="出力"
          value={"/___/\\__/\\_,_/_/  \\__/ /_/|_/___/_/|_|\\____/_/|_/\\____/ /_/ /___/"}
          className="h-[10px] min-w-0 flex-1 bg-transparent pl-[10px] font-['Liberation_Mono',monospace] text-[7px] text-[#222] outline-none"
        />
        <div className="flex w-[9px] flex-col items-center gap-[3px]">
          <button aria-label="上へ"><Ico className="h-[3px] w-[5px]" box="0 0 5 3"><path d="M.5 2.500l2-2 2 2" stroke="#444" /></Ico></button>
          <button aria-label="下へ"><Ico className="h-[3px] w-[5px]" box="0 0 5 3"><path d="M.5.500l2 2 2-2" stroke="#444" /></Ico></button>
        </div>
      </div>
      <form className="mt-px flex h-[13px] items-center gap-px pl-px">
        <input aria-label="コマンド" className="h-[13px] min-w-0 flex-1 border border-[#aaa] bg-white px-1 outline-none" />
        {["Txt", "Py", "Js"].map((lang, i) => (
          <label key={lang} className="flex items-center gap-[3px] pl-px pr-px text-[#222]">
            <input type="radio" name="lang" defaultChecked={i === 0} className="size-[7px] appearance-none rounded-full border border-[#555] bg-white checked:bg-[#222] checked:shadow-[inset_0_0_0_1px_#fff]" />
            {lang}
          </label>
        ))}
      </form>
    </section>
  );
}

export default function App() {
  return (
    <div className="flex h-screen min-h-[400px] flex-col overflow-hidden border border-[#64797c] bg-[#f1f1f1] font-['Liberation_Sans','Noto_Sans_CJK_JP',sans-serif] text-[7px] leading-[9px] [font-feature-settings:'palt']">
      <TitleBar />
      <TabBar />
      <Ribbon />
      <Canvas />
      <Timeline />
      <TextCommands />
    </div>
  );
}
